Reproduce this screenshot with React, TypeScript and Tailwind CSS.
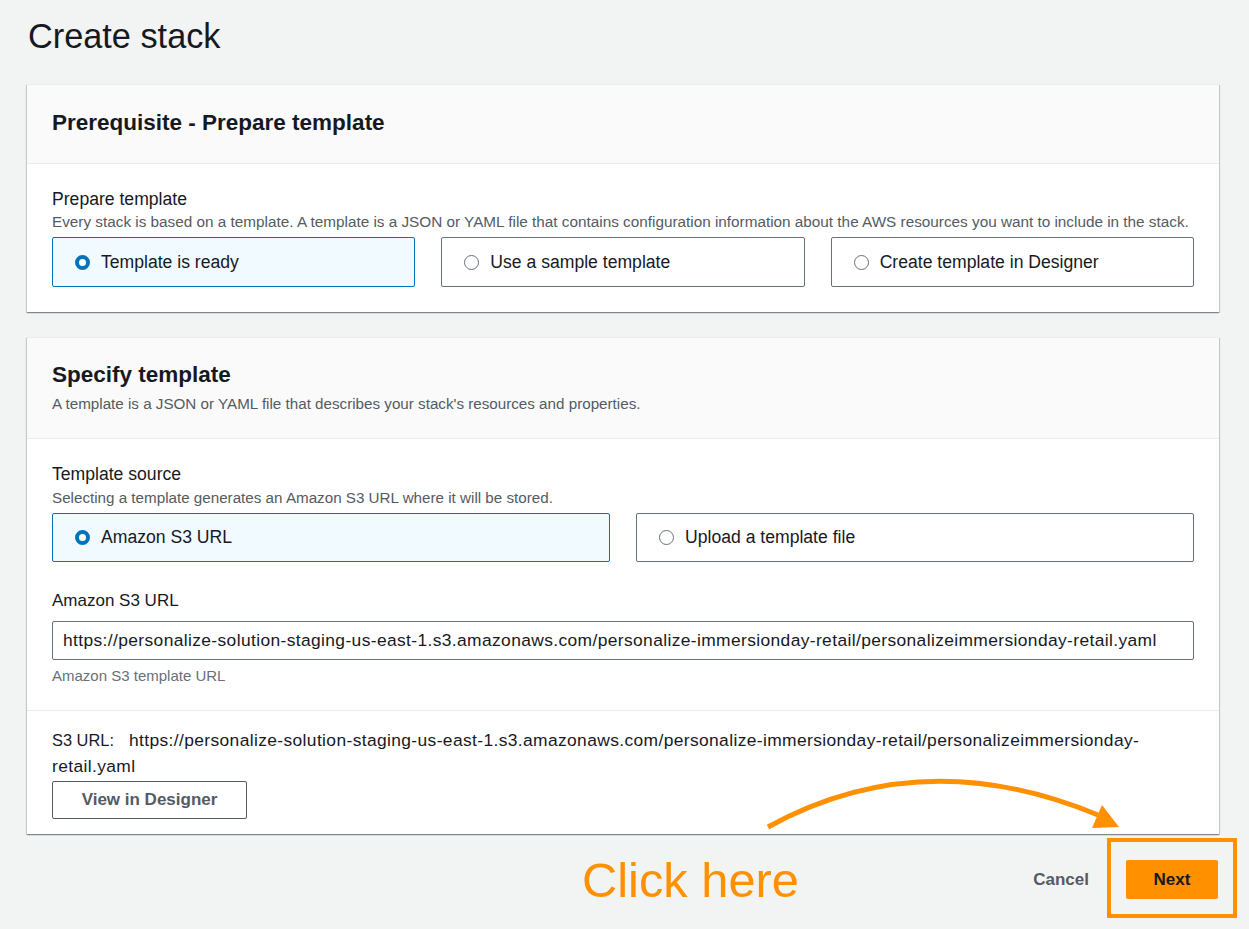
import React from "react";

const URL =
  "https://personalize-solution-staging-us-east-1.s3.amazonaws.com/personalize-immersionday-retail/personalizeimmersionday-retail.yaml";

function Radio({ checked }: { checked: boolean }) {
  return checked ? (
    <span className="inline-block w-[15px] h-[15px] rounded-full border-[4.5px] border-[#0073bb] bg-white shrink-0" />
  ) : (
    <span className="inline-block w-[15px] h-[15px] rounded-full border border-[#687078] bg-white shrink-0" />
  );
}

function Tile({ label, checked }: { label: string; checked?: boolean }) {
  return (
    <div
      className={
        checked
          ? "flex items-center gap-[11px] pl-[22px] rounded-[2px] border border-[#0073bb] bg-[#f1faff] h-full"
          : "flex items-center gap-[11px] pl-[22px] rounded-[2px] border border-[#687078] bg-white h-full"
      }
    >
      <Radio checked={!!checked} />
      <span className="text-[17.6px] text-[#16191f]">{label}</span>
    </div>
  );
}

const cardShadow =
  "bg-white border-t border-[#eaeded] shadow-[0_1px_1px_0_rgba(0,28,36,0.3),1px_1px_1px_0_rgba(0,28,36,0.15),-1px_1px_1px_0_rgba(0,28,36,0.15)]";

export default function App() {
  return (
    <div
      className="relative w-[1249px] h-[929px] overflow-hidden bg-[#f2f3f3] text-[#16191f]"
      style={{ fontFamily: '"Liberation Sans", Arial, sans-serif' }}
    >
      <div className="pl-[27px] pr-[30px]">
        <h1 className="pl-[1px] pt-[15px] text-[34.3px] leading-[42px] font-normal text-[#16191f]">
          Create stack
        </h1>

        {/* Card 1 */}
        <div className={"mt-[27px] " + cardShadow}>
          <div className="h-[79px] bg-[#fafafa] border-b border-[#eaeded] flex items-center px-[25px] pb-[3px]">
            <h2 className="text-[22.5px] font-bold leading-[28px]">Prerequisite - Prepare template</h2>
          </div>
          <div className="px-[25px] pt-[24px] pb-[25px]">
            <div className="text-[17.6px] leading-[22px]">Prepare template</div>
            <div className="mt-[2px] text-[15.3px] leading-[20px] text-[#545b64] whitespace-nowrap">
              Every stack is based on a template. A template is a JSON or YAML file that contains configuration
              information about the AWS resources you want to include in the stack.
            </div>
            <div className="mt-[5px] grid grid-cols-3 gap-[26px] h-[50px]">
              <Tile label="Template is ready" checked />
              <Tile label="Use a sample template" />
              <Tile label="Create template in Designer" />
            </div>
          </div>
        </div>

        {/* Card 2 */}
        <div className={"mt-[25px] " + cardShadow}>
          <div className="h-[101px] bg-[#fafafa] border-b border-[#eaeded] px-[25px] pt-[23px]">
            <h2 className="text-[22.5px] font-bold leading-[28px]">Specify template</h2>
            <div className="mt-[5px] text-[15.2px] leading-[20px] text-[#545b64]">
              A template is a JSON or YAML file that describes your stack's resources and properties.
            </div>
          </div>
          <div className="px-[25px] pt-[24px] pb-[25px] border-b border-[#eaeded]">
            <div className="text-[17.6px] leading-[22px]">Template source</div>
            <div className="mt-[3px] text-[15.2px] leading-[20px] text-[#545b64]">
              Selecting a template generates an Amazon S3 URL where it will be stored.
            </div>
            <div className="mt-[5px] grid grid-cols-2 gap-[26px] h-[49px]">
              <Tile label="Amazon S3 URL" checked />
              <Tile label="Upload a template file" />
            </div>
            <div className="mt-[28px] text-[17px] leading-[22px]">Amazon S3 URL</div>
            <div className="mt-[9px] h-[39px] rounded-[2px] border border-[#687078] bg-white flex items-center pl-[10px] text-[17.4px] tracking-[0.38px] text-[#16191f] whitespace-nowrap overflow-hidden">
              {URL}
            </div>
            <div className="mt-[7px] text-[15px] leading-[18px] text-[#687078]">Amazon S3 template URL</div>
          </div>
          <div className="px-[25px] pt-[16px] pb-[15px]">
            <div className="text-[17.4px] leading-[26px] whitespace-nowrap">
              <span className="text-[16.4px]">S3 URL:</span>
              <span className="ml-[15px] tracking-[0.38px]">
                https://personalize-solution-staging-us-east-1.s3.amazonaws.com/personalize-immersionday-retail/personalizeimmersionday-
              </span>
              <br />
              <span className="tracking-[0.38px]">retail.yaml</span>
            </div>
            <button className="mt-[2px] h-[38px] w-[195px] rounded-[2px] border border-[#545b64] bg-white text-[17px] font-bold text-[#545b64]">
              View in Designer
            </button>
          </div>
        </div>

        {/* Footer */}
        <div className="mt-[26px] flex justify-end items-center pr-[1px]">
          <span className="text-[17px] font-bold text-[#545b64] mr-[37px]">Cancel</span>
          <button className="h-[39px] w-[92px] rounded-[2px] bg-[#ff9000] text-[17px] font-bold text-[#16191f]">
            Next
          </button>
        </div>
      </div>

      {/* Annotations */}
      <div className="absolute left-[1107px] top-[838px] w-[130px] h-[80px] border-[4px] border-[#ff9000]" />
      <div className="absolute left-[582px] top-[853px] text-[48.8px] leading-[54px] text-[#ff9000] whitespace-nowrap">
        Click here
      </div>
      <svg className="absolute left-0 top-0 pointer-events-none" width="1249" height="929" viewBox="0 0 1249 929">
        <path d="M768 827 Q 922 742 1098 815" fill="none" stroke="#ff9000" strokeWidth="5" />
        <polygon points="1102,805 1119,827 1092,828" fill="#ff9000" />
      </svg>
    </div>
  );
}
